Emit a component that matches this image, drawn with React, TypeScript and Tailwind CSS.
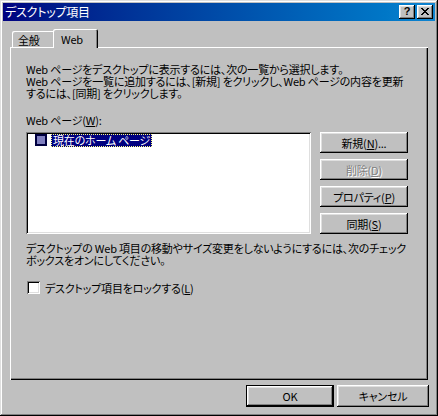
const raised =
  'shadow-[inset_-1px_-1px_#000,inset_1px_1px_#fff,inset_-2px_-2px_#808080,inset_2px_2px_#dfdfdf]'
const sunken =
  'shadow-[inset_1px_1px_#808080,inset_-1px_-1px_#fff,inset_2px_2px_#000,inset_-2px_-2px_#dfdfdf]'

function U({ children }: { children: string }) {
  return <span className="underline underline-offset-[1px]">{children}</span>
}

function Btn({
  children,
  disabled,
  className = '',
}: {
  children: React.ReactNode
  disabled?: boolean
  className?: string
}) {
  return (
    <div
      className={`flex items-center justify-center bg-[#c0c0c0] ${raised} ${
        disabled ? 'text-[#808080] [text-shadow:1px_1px_0_#fff]' : ''
      } ${className}`}
    >
      {children}
    </div>
  )
}

function CloseGlyph() {
  const px = [
    [0, 0], [1, 0], [6, 0], [7, 0],
    [1, 1], [2, 1], [5, 1], [6, 1],
    [2, 2], [3, 2], [4, 2], [5, 2],
    [3, 3], [4, 3],
    [2, 4], [3, 4], [4, 4], [5, 4],
    [1, 5], [2, 5], [5, 5], [6, 5],
    [0, 6], [1, 6], [6, 6], [7, 6],
  ]
  return (
    <svg width="8" height="7" viewBox="0 0 8 7" shapeRendering="crispEdges">
      {px.map(([x, y]) => (
        <rect key={`${x}-${y}`} x={x} y={y} width="1" height="1" fill="#000" />
      ))}
    </svg>
  )
}

function TitleBar() {
  return (
    <div className="h-[18px] flex items-center bg-linear-to-r from-[#000080] to-[#1084d0] pl-[2px] pr-[2px]">
      <span className="flex-1 text-white text-[12px] leading-[12px]">デスクトップ項目</span>
      <div className="flex gap-[2px]">
        <div className={`w-[16px] h-[14px] bg-[#c0c0c0] ${raised} flex items-center justify-center pb-px`}>
          <span className="font-['Liberation_Sans',sans-serif] font-bold text-[11px] leading-[11px]">?</span>
        </div>
        <div className={`w-[16px] h-[14px] bg-[#c0c0c0] ${raised} flex items-center justify-center pb-px pr-px`}>
          <CloseGlyph />
        </div>
      </div>
    </div>
  )
}

function Tabs() {
  return (
    <div className="relative z-10 -mb-px flex items-end h-[19px]">
      <div className="ml-[2px] mb-px h-[16px] w-[41px] pl-[6px] pt-px flex items-center rounded-tl-[2px] shadow-[inset_1px_1px_#fff]">
        全般
      </div>
      <div className="h-[19px] w-[45px] pl-[8px] flex items-center bg-[#c0c0c0] rounded-t-[2px] shadow-[inset_1px_1px_#fff,inset_-1px_0_#000,inset_-2px_0_#808080]">
        Web
      </div>
    </div>
  )
}

function Panel() {
  return (
    <div className="h-[333px] pl-[16px] pt-[16px] shadow-[inset_1px_1px_#fff,inset_-1px_-1px_#000,inset_-2px_-2px_#808080]">
      <div className="whitespace-nowrap">
        Web ページをデスクトップに表示するには、次の一覧から選択します。
        <br />
        Web ページを一覧に追加するには、[新規] をクリックし、Web ページの内容を更新
        <br />
        するには、[同期] をクリックします。
      </div>
      <div className="mt-[15px]">
        Web ページ(<U>W</U>):
      </div>
      <div className="mt-[6px] flex gap-[9px]">
        <div className={`w-[285px] h-[102px] bg-white p-[2px] ${sunken}`}>
          <div className="flex items-center gap-[4px] pl-[7px] h-[12px]">
            <div className="w-[12px] h-[12px] bg-[#8080c0] border-2 border-[#000040]" />
            <div className="h-[13px] px-[1px] flex items-center bg-[#000080] text-white border border-dotted border-[#ffff80] whitespace-nowrap">
              現在のホーム ページ
            </div>
          </div>
        </div>
        <div className="w-[88px] flex flex-col gap-[6px]">
          <Btn className="h-[21px]">
            新規(<U>N</U>)...
          </Btn>
          <Btn className="h-[21px]" disabled>
            削除(<U>D</U>)
          </Btn>
          <Btn className="h-[21px]">
            プロパティ(<U>P</U>)
          </Btn>
          <Btn className="h-[21px]">
            同期(<U>S</U>)
          </Btn>
        </div>
      </div>
      <div className="mt-[8px] whitespace-nowrap">
        デスクトップの Web 項目の移動やサイズ変更をしないようにするには、次のチェック
        <br />
        ボックスをオンにしてください。
      </div>
      <div className="mt-[15px] flex items-center gap-[5px] ml-px h-[13px]">
        <div className={`w-[13px] h-[13px] bg-white ${sunken}`} />
        <span>
          デスクトップ項目をロックする(<U>L</U>)
        </span>
      </div>
    </div>
  )
}

export default function App() {
  return (
    <div className="w-[438px] h-[416px] bg-[#c0c0c0] p-[3px] flex flex-col font-['Noto_Sans_CJK_JP',sans-serif] text-[11px] leading-[12px] tracking-[-0.2px] text-black [font-feature-settings:'palt'] shadow-[inset_-1px_-1px_#000,inset_1px_1px_#dfdfdf,inset_-2px_-2px_#808080,inset_2px_2px_#fff]">
      <TitleBar />
      <div className="px-[7px] pt-[8px]">
        <Tabs />
        <Panel />
      </div>
      <div className="flex justify-end gap-[3px] pr-[6px] pt-[5px]">
        <div className="w-[88px] h-[22px] border border-black flex">
          <Btn className="flex-1">OK</Btn>
        </div>
        <Btn className="w-[92px] h-[22px]">キャンセル</Btn>
      </div>
    </div>
  )
}
